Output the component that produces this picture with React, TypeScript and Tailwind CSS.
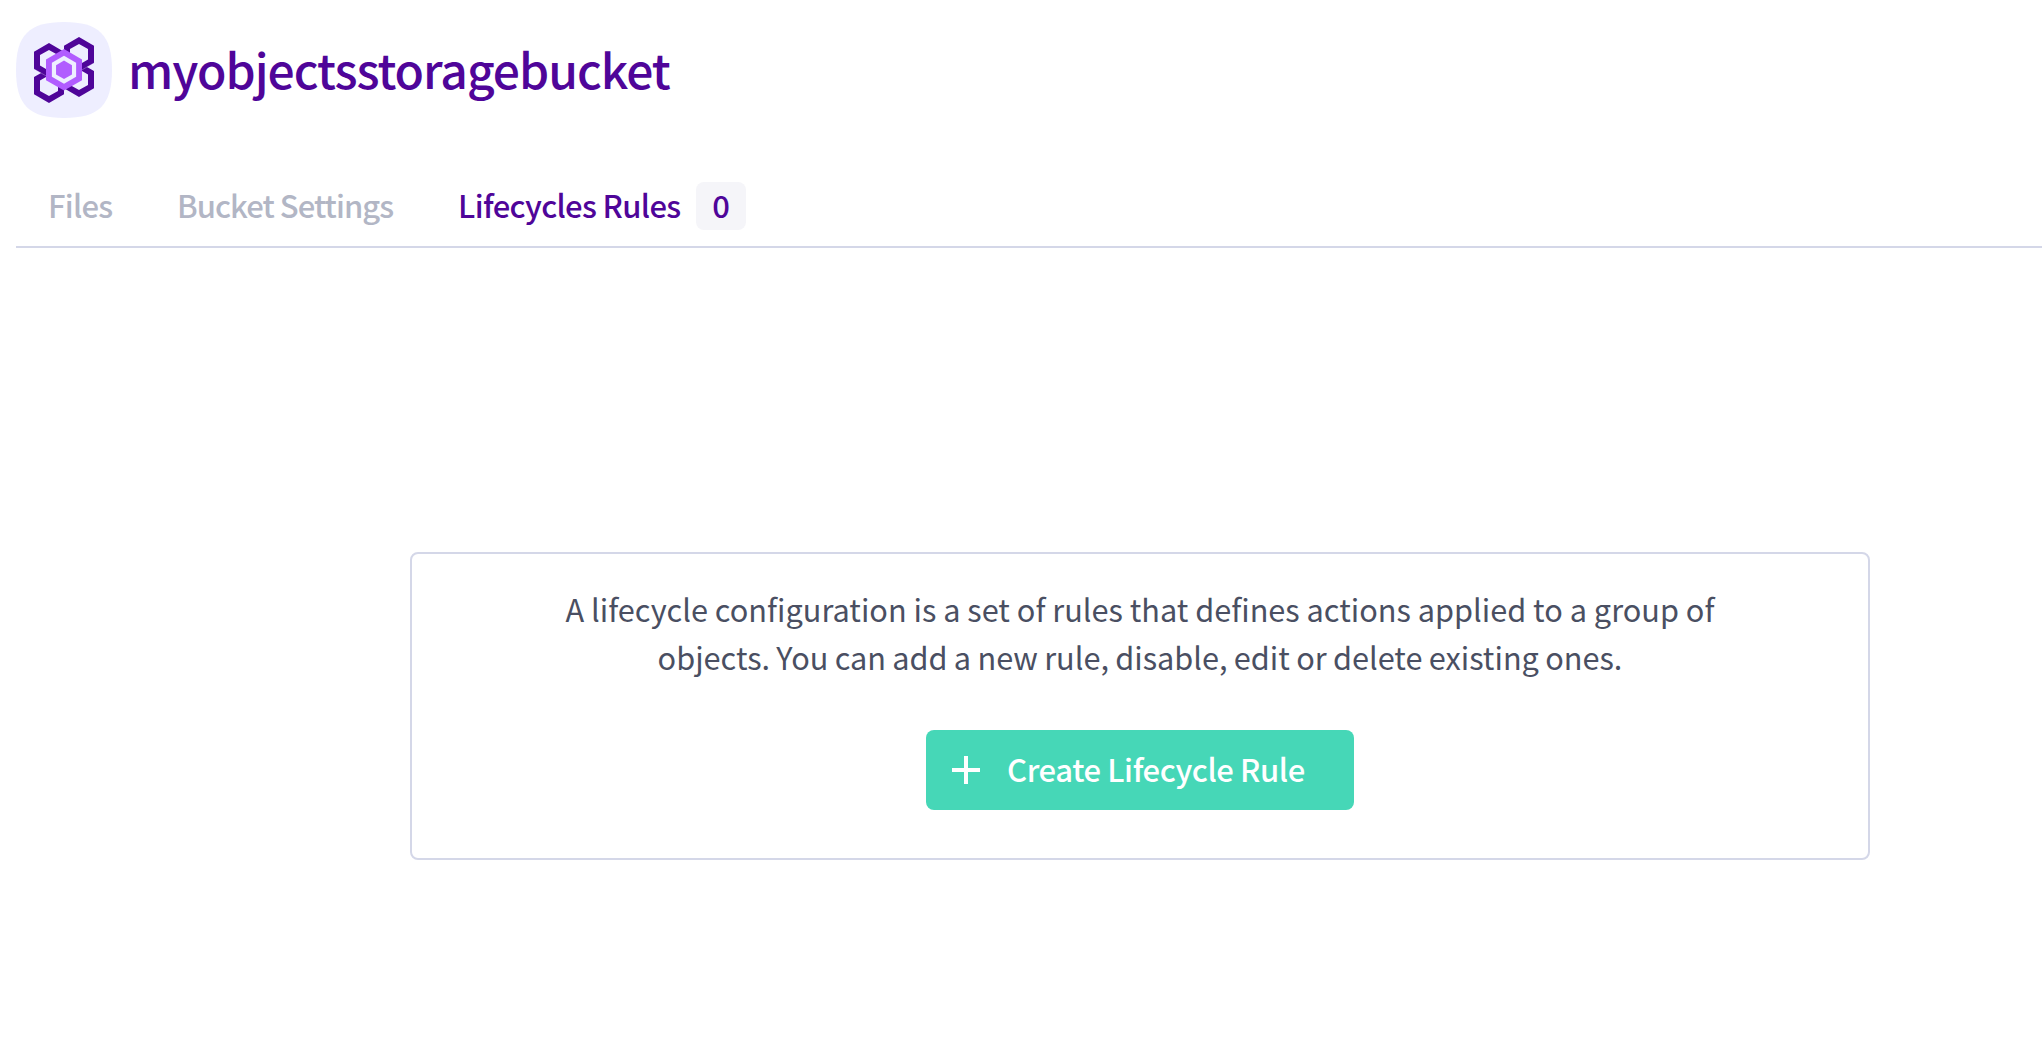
const font = "font-['Noto_Sans_CJK_SC','Noto_Sans',sans-serif]";

const hex = (cx: number, cy: number, r: number) => {
  const w = r * 0.866;
  const h = r / 2;
  return `M${cx} ${cy - r}L${cx + w} ${cy - h}V${cy + h}L${cx} ${cy + r}L${cx - w} ${cy + h}V${cy - h}Z`;
};

function BucketLogo() {
  return (
    <svg className="size-24 shrink-0" viewBox="16 22 96 96" fill="none">
      <path
        d="M64 22C99 22 112 35 112 70S99 118 64 118 16 105 16 70 29 22 64 22Z"
        fill="#eeeeff"
      />
      <g fillRule="evenodd" fill="#4f0599">
        <path d={hex(49, 60.3, 17.32) + hex(49, 60.3, 10.4)} />
        <path d={hex(49, 85.7, 17.32) + hex(49, 85.7, 10.4)} />
        <path d={hex(79, 54.3, 17.32) + hex(79, 54.3, 10.4)} />
        <path d={hex(79, 79.7, 17.32) + hex(79, 79.7, 10.4)} />
      </g>
      <path d="M34 69L49 77.6M94 63L79 71.6" stroke="#eeeeff" strokeWidth="0.5" opacity="0.6" />
      <path d={hex(64, 69.8, 20.8)} fill="#b15cff" />
      <path d={hex(64, 69.8, 14)} fill="#eeeeff" />
      <path d={hex(64, 69.8, 9.2)} fill="#b15cff" />
    </svg>
  );
}

function Header() {
  return (
    <header className="flex items-center pt-[22px]">
      <BucketLogo />
      <h1 className="ml-4 pb-[5px] text-[48px] leading-[60px] font-medium tracking-[-1.02px] whitespace-nowrap text-[#4f0599]">
        myobjectsstoragebucket
      </h1>
    </header>
  );
}

function Tabs() {
  return (
    <nav className="mt-[50px] flex h-20 items-start border-b-2 border-[#d4d7e8] pt-[13px] pl-8 text-[31px] leading-[48px] font-medium whitespace-nowrap text-[#b2b6c5]">
      <a className="w-[129px] tracking-[-0.75px]">Files</a>
      <a className="w-[281px] tracking-[-0.95px]">Bucket Settings</a>
      <a className="flex text-[#4f0599]">
        <span className="w-[238px] tracking-[-0.65px]">Lifecycles Rules</span>
        <span className="mt-px h-12 w-[50px] rounded-lg bg-[#f5f5f9] text-center leading-[46px]">0</span>
      </a>
    </nav>
  );
}

function EmptyState() {
  return (
    <section className="mx-auto mt-[304px] flex h-[308px] w-[1460px] flex-col items-center rounded-lg border-2 border-[#d4d7e8] pt-[31px]">
      <p className="text-center text-[30.7px] leading-[48px] whitespace-nowrap text-[#4a4f62]">
        A lifecycle configuration is a set of rules that defines actions applied to a group of
        <br />
        <span className="[word-spacing:-0.6px]">
          objects. You can add a new rule, disable, edit or delete existing ones.
        </span>
      </p>
      <button className="mt-[49px] flex h-20 w-[428px] items-center rounded-lg bg-[#46d7b7] pl-[26px] text-[31px] leading-[48px] font-medium whitespace-nowrap text-white">
        <svg className="size-7" viewBox="0 0 28 28" stroke="currentColor" strokeWidth="4">
          <path d="M14 0V28M0 14H28" />
        </svg>
        <span className="ml-[27px] pb-0.5 tracking-[-0.4px]">Create Lifecycle Rule</span>
      </button>
    </section>
  );
}

export default function App() {
  return (
    <div className={`h-[1060px] w-full overflow-hidden bg-white pl-4 ${font}`}>
      <main className="w-[2248px]">
        <Header />
        <Tabs />
        <EmptyState />
      </main>
    </div>
  );
}
